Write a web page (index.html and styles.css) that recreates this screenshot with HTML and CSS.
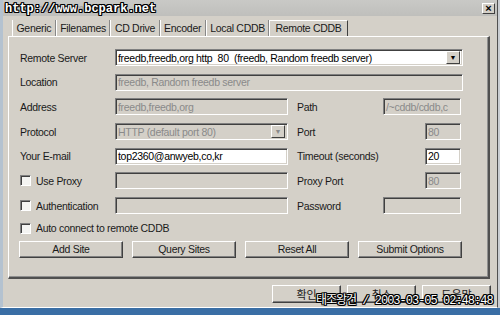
FILE: index.html
```html
<!DOCTYPE html>
<html lang="ko">
<head>
    <meta charset="UTF-8">
    <title>CDex configuration</title>
    <link rel="stylesheet" href="styles.css">
</head>
<body>
    <div class="window">
        <div class="titlebar">
            <span class="title">CDex configuration</span>
            <span class="close">&#215;</span>
        </div>
        <div class="tabs">
            <span class="tab">Generic</span>
            <span class="tab">Filenames</span>
            <span class="tab">CD Drive</span>
            <span class="tab">Encoder</span>
            <span class="tab">Local CDDB</span>
            <span class="tab active">Remote CDDB</span>
        </div>
        <div class="panel">
            <div class="row">
                <span class="label">Remote Server</span>
                <div class="field combo wide">
                    <span class="value">freedb,freedb,org http&nbsp;&nbsp;80&nbsp;&nbsp;(freedb, Random freedb server)</span>
                    <span class="drop">&#9660;</span>
                </div>
            </div>
            <div class="row">
                <span class="label">Location</span>
                <div class="field off wide"><span class="value">freedb, Random freedb server</span></div>
            </div>
            <div class="row">
                <span class="label">Address</span>
                <div class="field off half"><span class="value">freedb,freedb,org</span></div>
                <span class="label2">Path</span>
                <div class="field off path"><span class="value">/~cddb/cddb,c</span></div>
            </div>
            <div class="row">
                <span class="label">Protocol</span>
                <div class="field off combo half">
                    <span class="value">HTTP (default port 80)</span>
                    <span class="drop">&#9660;</span>
                </div>
                <span class="label2">Port</span>
                <div class="field off small"><span class="value">80</span></div>
            </div>
            <div class="row">
                <span class="label">Your E-mail</span>
                <div class="field half"><span class="value">top2360@anwyeb,co,kr</span></div>
                <span class="label2">Timeout (seconds)</span>
                <div class="field small"><span class="value">20</span></div>
            </div>
            <div class="row">
                <span class="label"><span class="check"></span>Use Proxy</span>
                <div class="field off half"></div>
                <span class="label2">Proxy Port</span>
                <div class="field off small"><span class="value">80</span></div>
            </div>
            <div class="row">
                <span class="label"><span class="check"></span>Authentication</span>
                <div class="field off half"></div>
                <span class="label2">Password</span>
                <div class="field off path"></div>
            </div>
            <div class="row auto">
                <span class="label free"><span class="check"></span>Auto connect to remote CDDB</span>
            </div>
            <div class="buttons">
                <span class="btn">Add Site</span>
                <span class="btn">Query Sites</span>
                <span class="btn">Reset All</span>
                <span class="btn">Submit Options</span>
            </div>
        </div>
        <div class="footer">
            <span class="btn ko">확인</span>
            <span class="btn ko">취소</span>
            <span class="btn ko">도움말</span>
        </div>
    </div>
    <div class="taskbar"></div>

    <div class="stamp top">http://www.bcpark.net</div>
    <div class="stamp bottom">태조왕건 / 2003-03-05 02:48:48</div>
</body>
</html>
```

FILE: styles.css
```css
body {
    margin: 0;
    width: 500px;
    height: 315px;
    overflow: hidden;
    background-color: #c9cdd2;
    font-family: "Liberation Sans", Arial, sans-serif;
    font-size: 10.5px;
    letter-spacing: -0.3px;
    color: #000;
    position: relative;
}
.window {
    box-sizing: border-box;
    width: 498px;
    height: 308px;
    background-color: #d4d0c8;
    border-left: 3px solid #b4c2d0;
    border-right: 1px solid #505050;
    border-bottom: 1px solid #fff;
    display: flex;
    flex-direction: column;
}
.titlebar {
    height: 16px;
    background: linear-gradient(#c9c9c6, #bfbfbc);
    display: flex;
    align-items: center;
    justify-content: space-between;
    padding: 0 2px 0 4px;
}
.title {
    color: #a4a4a4;
    font-weight: bold;
    font-size: 11px;
}
.close {
    box-sizing: border-box;
    width: 13px;
    height: 11px;
    background-color: #d4d0c8;
    border-top: 1px solid #fff;
    border-left: 1px solid #fff;
    border-right: 1px solid #404040;
    border-bottom: 1px solid #404040;
    font-size: 11px;
    line-height: 9px;
    text-align: center;
    font-weight: bold;
    letter-spacing: 0;
}
.tabs {
    display: flex;
    margin: 4px 0 0 9px;
    height: 16px;
}
.tab {
    padding: 0 3.5px;
    line-height: 16px;
    color: #1a1a1a;
    border-right: 1px solid #888;
    border-left: 1px solid #fff;
}
.tab.active {
    border-top: 1px solid #fff;
    border-right: 1px solid #404040;
    padding: 0 5px;
    line-height: 15px;
}
.panel {
    box-sizing: border-box;
    width: 482px;
    height: 243px;
    margin-left: 5px;
    border-top: 1px solid #fff;
    border-left: 1px solid #fff;
    border-right: 2px solid #505050;
    border-bottom: 2px solid #505050;
    box-shadow: inset -1px -1px 0 #909090;
    padding: 12px 0 0 11px;
    display: flex;
    flex-direction: column;
    gap: 7.7px;
}
.row {
    display: flex;
    align-items: center;
    height: 17px;
}
.label {
    width: 95px;
    flex-shrink: 0;
    display: flex;
    align-items: center;
    color: #1a1a1a;
    white-space: nowrap;
}
.label.free {
    width: auto;
}
.label2 {
    margin-left: 9px;
    margin-right: auto;
    color: #1a1a1a;
}
.row .field:last-child {
    margin-right: 27px;
}
.field {
    box-sizing: border-box;
    height: 17px;
    background-color: #fff;
    border-top: 1px solid #808080;
    border-left: 1px solid #808080;
    border-right: 1px solid #fff;
    border-bottom: 1px solid #fff;
    box-shadow: inset 1px 1px 0 #404040, inset -1px -1px 0 #d4d0c8;
    display: flex;
    align-items: center;
    overflow: hidden;
    flex-shrink: 0;
}
.field .value {
    padding-left: 2px;
    white-space: nowrap;
    overflow: hidden;
    flex: 1;
}
.field.off {
    background-color: #d4d0c8;
    color: #8a8a8a;
}
.wide { width: 348px; }
.half { width: 173px; }
.path { width: 78px; }
.small { width: 36px; }
.drop {
    box-sizing: border-box;
    width: 14px;
    height: 13px;
    margin-right: 2px;
    background-color: #d4d0c8;
    border-top: 1px solid #fff;
    border-left: 1px solid #fff;
    border-right: 1px solid #404040;
    border-bottom: 1px solid #404040;
    font-size: 7px;
    line-height: 11px;
    text-align: center;
    color: #000;
    flex-shrink: 0;
    letter-spacing: 0;
}
.field.off .drop {
    color: #8a8a8a;
}
.check {
    box-sizing: border-box;
    width: 11px;
    height: 11px;
    flex-shrink: 0;
    margin: 0 5px 0 0;
    background-color: #f4f4f2;
    border-top: 1px solid #808080;
    border-left: 1px solid #808080;
    border-right: 1px solid #fff;
    border-bottom: 1px solid #fff;
    box-shadow: inset 1px 1px 0 #404040;
}
.row.auto {
    margin-top: -2px;
}
.buttons {
    display: grid;
    grid-template-columns: repeat(4, 104px);
    gap: 9px;
    margin: -4px 0 0 -1px;
}
.btn {
    box-sizing: border-box;
    height: 17px;
    background-color: #d4d0c8;
    border-top: 1px solid #fff;
    border-left: 1px solid #fff;
    border-right: 1px solid #404040;
    border-bottom: 1px solid #404040;
    box-shadow: inset -1px -1px 0 #808080;
    text-align: center;
    line-height: 15px;
    color: #1a1a1a;
}
.footer {
    display: flex;
    justify-content: flex-end;
    gap: 6px;
    margin: 6px 6px 0 0;
}
.footer .btn {
    width: 69px;
    height: 18px;
    line-height: 16px;
    font-family: "Noto Sans CJK KR", sans-serif;
    font-size: 11px;
    letter-spacing: 0;
}
.taskbar {
    height: 7px;
    background-color: #3a6ea5;
}
.stamp {
    position: absolute;
    font-family: "Liberation Mono", monospace;
    font-weight: bold;
    color: #fff;
    white-space: nowrap;
    letter-spacing: 0;
    text-shadow: 1px 0 0 #000, -1px 0 0 #000, 0 1px 0 #000, 0 -1px 0 #000,
        1px 1px 0 #000, -1px -1px 0 #000, 1px -1px 0 #000, -1px 1px 0 #000;
}
.stamp.top {
    left: 5px;
    top: 2px;
    font-size: 12px;
}
.stamp.bottom {
    left: 316px;
    top: 290px;
    font-size: 12px;
    font-weight: normal;
    letter-spacing: -1px;
    font-family: "Liberation Mono", "Noto Sans CJK KR", monospace;
}
```
